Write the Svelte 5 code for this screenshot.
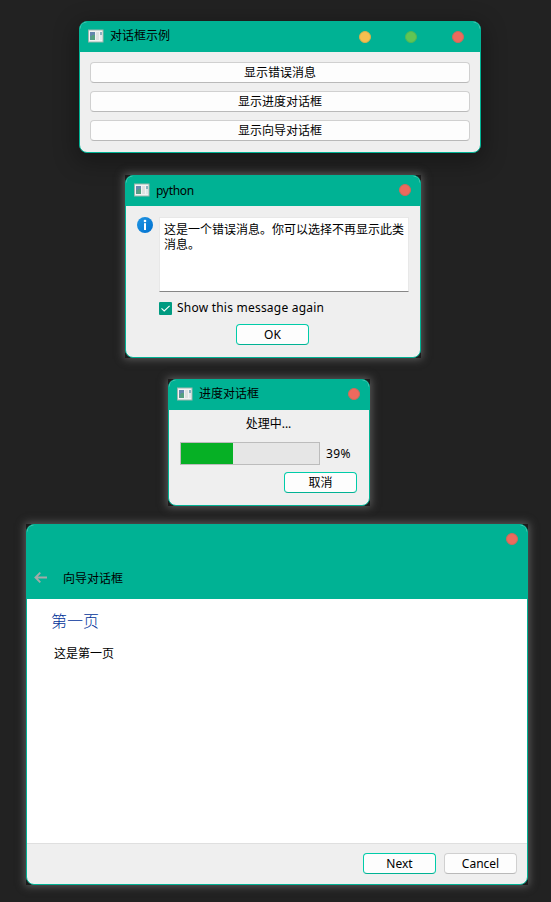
<script>
  const actions = ['显示错误消息', '显示进度对话框', '显示向导对话框'];
  const progress = 39;
  let again = $state(true);
</script>

{#snippet appIcon()}
  <svg class="app-icon" width="16" height="14" viewBox="0 0 16 14" aria-hidden="true">
    <rect x="0" y="0.5" width="15.5" height="13" fill="#9fb5ae" />
    <rect x="1" y="1.5" width="13.5" height="11" fill="#f3f3f3" />
    <rect x="2" y="3" width="5" height="4" fill="#6487ad" />
    <rect x="2" y="7" width="5" height="4" fill="#569a8c" />
    <rect x="4" y="6" width="3" height="5" fill="#55a080" />
    <rect x="8" y="3" width="3" height="8" fill="#dfe2e1" />
    <rect x="12" y="3" width="2" height="3" fill="#8bb2c0" />
    <rect x="12" y="6" width="2" height="5" fill="#e0e9ea" />
  </svg>
{/snippet}

<main>
  <section class="window launcher">
    <header>
      {@render appIcon()}
      <span class="title">对话框示例</span>
      <i class="dot yellow"></i>
      <i class="dot green"></i>
      <i class="dot red"></i>
    </header>
    <div class="stack">
      {#each actions as label}
        <button>{label}</button>
      {/each}
    </div>
  </section>

  <div class="glow message">
    <section class="window">
      <header>
        {@render appIcon()}
        <span class="title latin">python</span>
        <i class="dot red"></i>
      </header>
      <div class="body">
        <svg class="info" width="16" height="16" viewBox="0 0 16 16" aria-hidden="true">
          <defs>
            <linearGradient id="blue" x1="0" y1="0" x2="1" y2="1">
              <stop offset="0" stop-color="#2196e3" />
              <stop offset="1" stop-color="#0070cf" />
            </linearGradient>
          </defs>
          <circle cx="8" cy="8" r="8" fill="url(#blue)" />
          <circle cx="8" cy="4" r="1.3" fill="#fff" />
          <rect x="7" y="6.2" width="2" height="6.8" fill="#fff" />
        </svg>
        <div class="column">
          <div class="textbox">这是一个错误消息。你可以选择不再显示此类消息。</div>
          <label>
            <input type="checkbox" bind:checked={again} />
            <span class="check">
              {#if again}
                <svg width="13" height="13" viewBox="0 0 13 13" aria-hidden="true">
                  <path d="M2.5 6.4 L5.2 9 L10.6 3.8" fill="none" stroke="#fff" stroke-width="1.1" />
                </svg>
              {/if}
            </span>
            <span class="again">Show this message again</span>
          </label>
        </div>
      </div>
      <button class="primary ok">OK</button>
    </section>
  </div>

  <div class="glow working">
    <section class="window">
      <header>
        {@render appIcon()}
        <span class="title">进度对话框</span>
        <i class="dot red"></i>
      </header>
      <p>处理中...</p>
      <div class="progress">
        <div class="track"><div class="fill" style="width: {progress - 1}%"></div></div>
        <span class="percent">{progress}%</span>
      </div>
      <button class="primary cancel">取消</button>
    </section>
  </div>

  <div class="glow wizard">
    <section class="window">
      <header>
        <div class="top"><i class="dot red"></i></div>
        <div class="nav">
          <svg width="13" height="11" viewBox="0 0 13 11" aria-hidden="true">
            <path d="M13 5.5 H1.5 M6.3 0.7 L1.5 5.5 L6.3 10.3" fill="none" stroke="#a3aaa8" stroke-width="1.9" />
          </svg>
          <span class="title">向导对话框</span>
        </div>
      </header>
      <div class="page">
        <h1>第一页</h1>
        <p>这是第一页</p>
      </div>
      <footer>
        <button class="primary">Next</button>
        <button>Cancel</button>
      </footer>
    </section>
  </div>
</main>

<style>
  :global(body) {
    background: #222;
  }
  main {
    box-sizing: border-box;
    width: 551px;
    height: 902px;
    padding-top: 21px;
    display: flex;
    flex-direction: column;
    overflow: hidden;
    background: #222;
    color: #000;
    font: 12px/16px 'Noto Sans', 'Noto Sans CJK SC', sans-serif;
  }
  .window {
    box-sizing: border-box;
    display: flex;
    flex-direction: column;
    height: 100%;
    overflow: hidden;
    border: 1px solid #00b294;
    border-radius: 8px;
    background: #efefef;
  }
  .glow {
    background: #1c1c1c;
    box-shadow: 0 0 8px 1px #606060;
  }
  header {
    flex: none;
    box-sizing: border-box;
    display: flex;
    height: 30px;
    padding-left: 8px;
    background: #00b294;
  }
  .app-icon {
    flex: none;
    margin-top: 7px;
  }
  .title {
    flex: 1;
    margin: 6px 0 0 6px;
    white-space: nowrap;
  }
  .title.latin {
    margin-top: 7px;
    letter-spacing: -0.3px;
  }
  .dot {
    flex: none;
    box-sizing: border-box;
    width: 12px;
    height: 12px;
    margin-top: 9px;
    border: 1px solid;
    border-radius: 50%;
  }
  .yellow {
    background: #f5bf4f;
    border-color: #d9b04c;
  }
  .green {
    background: #61c554;
    border-color: #4eb955;
  }
  .red {
    background: #ed6a5e;
    border-color: #ce6a5a;
  }
  button {
    box-sizing: border-box;
    display: block;
    height: 21px;
    padding: 0;
    border: 1px solid #d0d0d0;
    border-bottom-color: #b9b9b9;
    border-radius: 4px;
    background: #fdfdfd;
    color: #000;
    font: inherit;
    line-height: 19px;
    text-align: center;
  }
  .primary {
    border-color: #00cca9;
    border-bottom-color: #00b294;
  }

  .launcher {
    flex: none;
    width: 402px;
    height: 132px;
    margin-left: 79px;
    box-shadow: 0 6px 22px 4px rgba(0, 0, 0, 0.3);
  }
  .launcher .dot + .dot {
    margin-left: 34px;
  }
  .launcher .dot.red {
    margin-left: 35px;
    margin-right: 16px;
  }
  .stack {
    display: flex;
    flex-direction: column;
    gap: 8px;
    padding: 10px;
  }

  .message {
    flex: none;
    width: 296px;
    height: 183px;
    margin: 22px 0 0 125px;
  }
  .message .dot {
    margin: 8px 9px 0 0;
  }
  .body {
    display: flex;
    padding: 11px 11px 0;
  }
  .info {
    flex: none;
    margin-right: 6px;
  }
  .textbox {
    box-sizing: border-box;
    width: 250px;
    height: 75px;
    padding: 4px 3px 0 4px;
    border: 1px solid #e8e8e8;
    border-bottom-color: #868686;
    background: #fff;
    line-height: 15px;
  }
  label {
    display: flex;
    align-items: center;
    height: 16px;
    margin-top: 8px;
  }
  input {
    position: absolute;
    opacity: 0;
    pointer-events: none;
  }
  .check {
    width: 13px;
    height: 13px;
    margin-right: 5px;
    background: #009b81;
    border-radius: 1px;
  }
  .check svg {
    display: block;
  }
  .again {
    letter-spacing: 0.22px;
    white-space: nowrap;
  }
  .ok {
    width: 73px;
    margin: 8px 0 0 110px;
  }

  .working {
    flex: none;
    width: 202px;
    height: 127px;
    margin: 21px 0 0 168px;
  }
  .working .dot {
    margin: 8px 9px 0 0;
  }
  .working p {
    margin: 6px 1px 0 0;
    text-align: center;
  }
  .progress {
    display: flex;
    align-items: center;
    margin: 10px 0 0 11px;
  }
  .percent {
    letter-spacing: 0.4px;
  }
  .track {
    box-sizing: border-box;
    width: 140px;
    height: 23px;
    margin-right: 6px;
    border: 1px solid #bcbcbc;
    background: #e6e6e6;
  }
  .fill {
    height: 100%;
    background: #06b025;
  }
  .cancel {
    width: 73px;
    margin: 7px 0 0 115px;
  }

  .wizard {
    flex: none;
    width: 502px;
    height: 361px;
    margin: 18px 0 0 26px;
  }
  .wizard header {
    flex-direction: column;
    height: 74px;
    padding: 0;
  }
  .top {
    display: flex;
    justify-content: flex-end;
    height: 40px;
    padding-right: 9px;
  }
  .wizard .dot {
    margin-top: 8px;
  }
  .nav {
    display: flex;
    padding-left: 7px;
  }
  .nav svg {
    margin-top: 7px;
  }
  .nav .title {
    margin-left: 16px;
  }
  .page {
    flex: 1;
    padding: 10px 24px;
    background: #fff;
  }
  h1 {
    margin: 0;
    color: #003399;
    font-size: 16px;
    font-weight: 300;
    line-height: 24px;
  }
  .page p {
    margin: 13px 0 0 3px;
  }
  footer {
    box-sizing: border-box;
    display: flex;
    justify-content: flex-end;
    gap: 8px;
    height: 41px;
    padding: 9px 10px 0;
    border-top: 1px solid #dfdfdf;
  }
  footer button {
    width: 73px;
  }
</style>
